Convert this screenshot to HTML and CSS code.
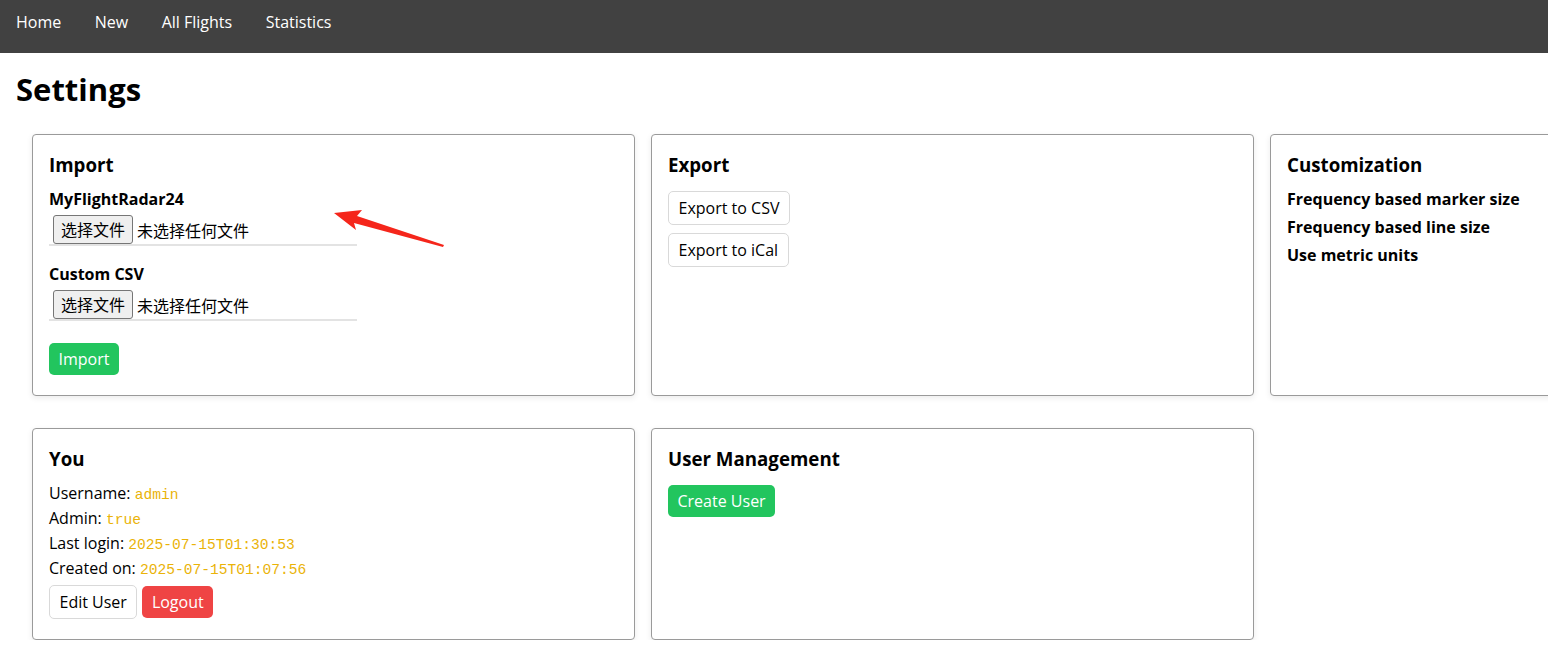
FILE: index.html
```html
<!DOCTYPE html>
<html lang="zh">
<head>
<meta charset="utf-8">
<title>Settings</title>
<link rel="stylesheet" href="styles.css">
</head>
<body>
<nav class="nav">
  <a href="#">Home</a>
  <a href="#">New</a>
  <a href="#">All Flights</a>
  <a href="#">Statistics</a>
</nav>
<main class="page">
  <h1 class="title">Settings</h1>
  <div class="grid">
    <section class="card">
      <h3>Import</h3>
      <div class="field">
        <div class="label">MyFlightRadar24</div>
        <label class="file"><span class="file-btn">选择文件</span><span class="file-name">未选择任何文件</span></label>
      </div>
      <div class="field">
        <div class="label">Custom CSV</div>
        <label class="file"><span class="file-btn">选择文件</span><span class="file-name">未选择任何文件</span></label>
      </div>
      <div class="actions"><button class="btn btn-green">Import</button></div>
      <svg class="arrow" width="120" height="50" viewBox="330 205 120 50"><polygon points="334,213 362,210 357,216 444,245 443,247 354,223 356,230" fill="#f5261b"/></svg>
    </section>
    <section class="card">
      <h3>Export</h3>
      <div class="stack">
        <button class="btn btn-white">Export to CSV</button>
        <button class="btn btn-white">Export to iCal</button>
      </div>
    </section>
    <section class="card">
      <h3>Customization</h3>
      <div class="opts">
        <div>Frequency based marker size</div>
        <div>Frequency based line size</div>
        <div>Use metric units</div>
      </div>
    </section>
    <section class="card">
      <h3>You</h3>
      <div class="info">
        <div>Username: <code>admin</code></div>
        <div>Admin: <code>true</code></div>
        <div>Last login: <code>2025-07-15T01:30:53</code></div>
        <div>Created on: <code>2025-07-15T01:07:56</code></div>
      </div>
      <div class="row">
        <button class="btn btn-white">Edit User</button>
        <button class="btn btn-red">Logout</button>
      </div>
    </section>
    <section class="card">
      <h3>User Management</h3>
      <div class="stack">
        <button class="btn btn-green">Create User</button>
      </div>
    </section>
  </div>
</main>
</body>
</html>
```

FILE: styles.css
```css
html, body {
  margin: 0;
  padding: 0;
  overflow: hidden;
  background: #fff;
}
body {
  font-family: "Open Sans", "Noto Sans", "Noto Sans CJK SC", sans-serif;
  font-size: 16px;
  line-height: 24px;
  color: #000;
  width: 1548px;
}
.nav {
  background: #414141;
  height: 53px;
  display: flex;
  align-items: center;
  gap: 1.5px;
  padding-bottom: 9px;
  box-sizing: border-box;
}
.nav a {
  color: #fff;
  text-decoration: none;
  padding: 0 16px;
  font-size: 16px;
}
.page {
  padding: 0 16px;
}
.title {
  margin: 16px 0 25px;
  font-size: 31px;
  line-height: 40px;
  font-weight: 700;
}
.grid {
  display: grid;
  grid-template-columns: repeat(3, 603px);
  gap: 32px 16px;
  padding-left: 16px;
  width: max-content;
}
.card {
  position: relative;
  border: 1px solid #9a9a9a;
  border-radius: 4px;
  box-shadow: 0 2px 6px rgba(0,0,0,0.08);
  padding: 16px 16px 20px;
  background: #fff;
}
.card h3 {
  margin: 0 0 8px;
  font-size: 18.72px;
  line-height: 28px;
  font-weight: 700;
}
.label {
  font-weight: 700;
  line-height: 24px;
}
.field + .field {
  margin-top: 16px;
}
.file {
  display: flex;
  align-items: center;
  width: 300px;
  padding: 4px 4px 0;
  border-bottom: 2px solid #e3e3e3;
  font-family: "Noto Sans CJK SC", sans-serif;
  font-size: 16px;
}
.file-btn {
  background: #efefef;
  border: 1px solid #767676;
  border-radius: 3px;
  padding: 0 7px;
  height: 27px;
  line-height: 27px;
  margin-right: 4px;
}
.actions {
  margin-top: 22px;
}
.btn {
  font-family: "Open Sans", "Noto Sans", sans-serif;
  font-size: 16px;
  line-height: 24px;
  padding: 4px 9.5px;
  border-radius: 5px;
  cursor: pointer;
}
.btn-green {
  background: #22c55e;
  color: #fff;
  border: 0;
}
.btn-red {
  background: #ef4444;
  color: #fff;
  border: 0;
}
.btn-white {
  background: #fff;
  color: #000;
  border: 1px solid #d9d9d9;
}
.stack {
  display: flex;
  flex-direction: column;
  align-items: flex-start;
  gap: 8px;
  padding-top: 4px;
}
.opts {
  font-weight: 700;
  line-height: 28px;
  margin-top: -2px;
}
.info > div {
  height: 25px;
  line-height: 25px;
}
.info code {
  font-family: "Liberation Mono", "DejaVu Sans Mono", monospace;
  font-size: 14.6px;
  line-height: 1;
  color: #eab308;
}
.row {
  display: flex;
  align-items: center;
  gap: 5px;
  margin-top: 4px;
}
.arrow {
  position: absolute;
  left: 297px;
  top: 70px;
}
```
